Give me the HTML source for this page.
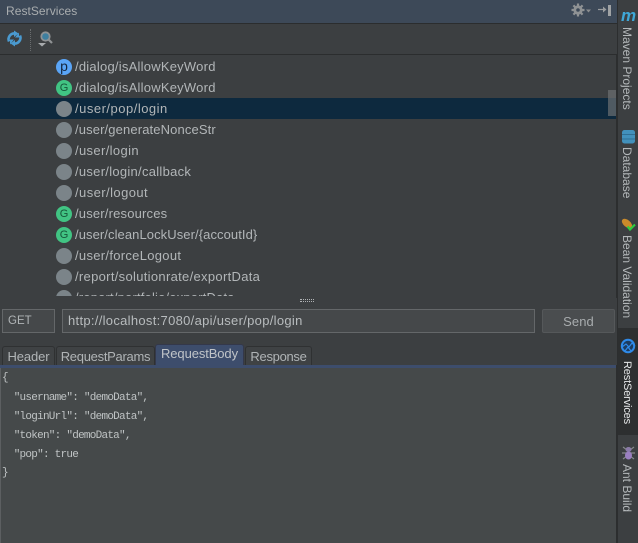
<!DOCTYPE html>
<html><head><meta charset="utf-8"><style>
*{box-sizing:border-box}
html,body{margin:0;padding:0}
body{width:638px;height:543px;overflow:hidden;background:#3c3f41;position:relative;font-family:"Liberation Sans",sans-serif;color:#b4b8ba}
div{position:absolute}
.t{white-space:nowrap;font-size:13px;line-height:18px}
.row{left:75px;width:500px;height:21px;line-height:21px;font-size:13px;color:#b2b6b8;white-space:nowrap;letter-spacing:.18px}
.ic{left:56px;width:16px;height:16px;border-radius:8px;background:#7b8489;color:#2d3436;font-size:11px;line-height:16px;text-align:center}
.g{background:#41c483;color:#17573a}
.p{background:#5aa5f7;color:#14263e;font-size:14px;line-height:14px}
.tab{top:346px;height:20px;background:#3f4244;border:1px solid #2f3132;border-bottom:0;border-radius:3px 3px 0 0;font-size:13px;line-height:19px;text-align:center;color:#b0b4b6}
.code{left:2px;font-family:"Liberation Mono",monospace;font-size:11px;letter-spacing:-.75px;line-height:19px;color:#bfc3c4;white-space:pre}
.v{left:617px;width:20px;writing-mode:vertical-rl;font-size:12px;line-height:20px;white-space:nowrap;text-align:left;color:#b4b8ba}
</style></head><body>
<div style="left:0;top:0;width:617px;height:23px;background:#3d4958"></div>
<div class="t" style="left:6px;top:2px;font-size:12px;color:#a9adaf;letter-spacing:.05px">RestServices</div>
<svg style="position:absolute;left:569px;top:2px" width="24" height="16" viewBox="0 0 24 16"><g fill="#8f9294"><circle cx="9" cy="8" r="4.600"/><g stroke="#8f9294" stroke-width="2.200"><path d="M9 1.500v13M2.500 8h13M4.400 3.400l9.200 9.200M13.600 3.400l-9.200 9.200"/></g><circle cx="9" cy="8" r="1.800" fill="#3d4958"/><path d="M17 7.500h5l-2.500 3z" fill="#8a8d8f"/></g></svg>
<svg style="position:absolute;left:597px;top:3px" width="16" height="14" viewBox="0 0 16 14"><path d="M1 6.500h7" stroke="#9a9d9f" stroke-width="1.200"/><path d="M6 3.500l3.500 3-3.500 3z" fill="#9a9d9f"/><rect x="11" y="2" width="3" height="11" fill="#a0a3a5"/></svg>
<div style="left:0;top:23px;width:617px;height:1px;background:#2b2d2e"></div>
<svg style="position:absolute;left:6px;top:30px" width="17" height="17" viewBox="0 0 17 17"><g fill="none" stroke="#4a9ad0" stroke-width="2.600"><path d="M3 11.500C1.300 7.500 4.500 3 9 3.500"/><path d="M14 5.500c1.700 4-1.500 8.500-6 8"/></g><path d="M8 .5l4.500 3L8 7z" fill="#4a9ad0"/><path d="M9 10l-4.500 3.500L9 16.500z" fill="#4a9ad0"/><path d="M13 2.500v5h-4z" fill="#4a9ad0"/><path d="M4 14.500v-5h4z" fill="#4a9ad0"/></svg>
<div style="left:30px;top:29px;width:1px;height:22px;border-left:1px dotted #6a6d6f"></div>
<svg style="position:absolute;left:37px;top:31px" width="17" height="17" viewBox="0 0 17 17"><circle cx="8.500" cy="5.500" r="4.200" fill="#3f7f9f" stroke="#8f9294" stroke-width="1.800"/><path d="M11.500 8.500l3.500 3.500" stroke="#8f9294" stroke-width="2.200"/><path d="M1 12h8l-4 3.500z" fill="#a8abad"/></svg>
<div style="left:0;top:54px;width:617px;height:1px;background:#2b2d2e"></div>

<div style="left:0;top:98px;width:616px;height:21px;background:#0d293e"></div>
<div class="ic p" style="top:59px">p</div><div class="row" style="top:56px;letter-spacing:.23px">/dialog/isAllowKeyWord</div>
<div class="ic g" style="top:80px">G</div><div class="row" style="top:77px;letter-spacing:.23px">/dialog/isAllowKeyWord</div>
<div class="ic" style="top:101px"></div><div class="row" style="top:98px;letter-spacing:.5px">/user/pop/login</div>
<div class="ic" style="top:122px"></div><div class="row" style="top:119px;letter-spacing:.13px">/user/generateNonceStr</div>
<div class="ic" style="top:143px"></div><div class="row" style="top:140px;letter-spacing:.36px">/user/login</div>
<div class="ic" style="top:164px"></div><div class="row" style="top:161px;letter-spacing:.28px">/user/login/callback</div>
<div class="ic" style="top:185px"></div><div class="row" style="top:182px;letter-spacing:.43px">/user/logout</div>
<div class="ic g" style="top:206px">G</div><div class="row" style="top:203px">/user/resources</div>
<div class="ic g" style="top:227px">G</div><div class="row" style="top:224px;letter-spacing:.08px">/user/cleanLockUser/{accoutId}</div>
<div class="ic" style="top:248px"></div><div class="row" style="top:245px;letter-spacing:.3px">/user/forceLogout</div>
<div class="ic" style="top:269px"></div><div class="row" style="top:266px;letter-spacing:.31px">/report/solutionrate/exportData</div>
<div class="ic" style="top:290px"></div><div class="row" style="top:287px">/report/portfolio/exportData</div>
<div style="left:0;top:296px;width:617px;height:13px;background:#3c3f41"></div>
<div style="left:300px;top:299px;width:14px;height:3px;border-top:1px dotted #b0b3b5;border-bottom:1px dotted #b0b3b5"></div>

<div style="left:608px;top:90px;width:8px;height:26px;background:#4f5a62"></div>
<div style="left:608px;top:90px;width:8px;height:8px;background:#5e6163"></div>
<div style="left:616px;top:55px;width:1px;height:243px;background:#2c2e2f"></div>

<div style="left:2px;top:309px;width:53px;height:24px;border:1px solid #646769;background:#45484a;font-size:11.500px;line-height:22px;padding-left:5px;color:#b0b4b6">GET</div>
<div style="left:62px;top:309px;width:473px;height:24px;border:1px solid #646769;background:#45484a;font-size:13px;line-height:22px;padding-left:5px;color:#b8bcbe;white-space:nowrap;letter-spacing:.3px">http://localhost:7080/api/user/pop/login</div>
<div style="left:542px;top:309px;width:73px;height:24px;border:1px solid #55585a;border-radius:2px;background:#4a4d4f;font-size:13px;line-height:23px;text-align:center;color:#a8acae;letter-spacing:.1px">Send</div>

<div class="tab" style="left:2px;width:53px;letter-spacing:-.1px">Header</div>
<div class="tab" style="left:56px;width:99px;letter-spacing:-.28px">RequestParams</div>
<div class="tab" style="left:155px;top:344px;width:89px;height:22px;background:#3d4d6c;color:#c0c4c8;line-height:18px;border-color:#34384a;letter-spacing:-.1px">RequestBody</div>
<div class="tab" style="left:245px;width:67px;letter-spacing:-.3px">Response</div>
<div style="left:0;top:365px;width:617px;height:3px;background:#3d4d6c"></div>
<div style="left:0;top:368px;width:616px;height:175px;background:#45494a"></div>
<div style="left:0;top:368px;width:1px;height:175px;background:#5c5f61"></div>
<div style="left:616px;top:365px;width:1px;height:178px;background:#2c2e2f"></div>

<div class="code" style="top:369px">{</div>
<div class="code" style="top:389px">  "username": "demoData",</div>
<div class="code" style="top:408px">  "loginUrl": "demoData",</div>
<div class="code" style="top:427px">  "token": "demoData",</div>
<div class="code" style="top:446px">  "pop": true</div>
<div class="code" style="top:464px">}</div>

<div style="left:617px;top:0;width:1px;height:543px;background:#2c2e2f"></div>
<div style="left:618px;top:0;width:20px;height:543px;background:#3c3f41"></div>
<div style="left:618px;top:328px;width:20px;height:107px;background:#2d2f30"></div>
<div class="t" style="left:621px;top:7px;font:italic bold 17px 'Liberation Sans',sans-serif;color:#3fa7d6;line-height:18px">m</div>
<div class="v" style="top:27px">Maven Projects</div>
<svg style="position:absolute;left:622px;top:130px" width="13" height="14" viewBox="0 0 13 14"><rect x="0" y="0" width="13" height="13.500" rx="2.500" fill="#4291bc"/><path d="M0 4.500h13M0 9h13" stroke="#2f6f95" stroke-width="1"/></svg>
<div class="v" style="top:147px">Database</div>
<svg style="position:absolute;left:621px;top:218px" width="15" height="14" viewBox="0 0 15 14"><ellipse cx="6" cy="5.500" rx="6" ry="3.500" transform="rotate(40 6 5.500)" fill="#c98a2b"/><path d="M6.500 8.500l2.500 3L14 6.500" fill="none" stroke="#2ecc40" stroke-width="2.200"/></svg>
<div class="v" style="top:235px">Bean Validation</div>
<svg style="position:absolute;left:620px;top:338px" width="16" height="16" viewBox="0 0 16 16"><circle cx="8" cy="8" r="6.200" fill="#1d3c60" stroke="#2f8ae8" stroke-width="2"/><path d="M2 9l4-3 3 3 3-4 3 3M5 13l3-4 3 4" fill="none" stroke="#2f8ae8" stroke-width="1.200"/></svg>
<div class="v" style="top:361px;color:#e6e8e9;font-size:11px;letter-spacing:-.15px">RestServices</div>
<svg style="position:absolute;left:621px;top:445px" width="15" height="16" viewBox="0 0 15 16"><g stroke="#85888a" stroke-width="1.200" fill="none"><path d="M2 2l4 3M13 2L9 5M1 8h13M2 14l4-3M13 14l-4-3"/></g><ellipse cx="7.500" cy="4.500" rx="3" ry="2.500" fill="#8a7aa8"/><ellipse cx="7.500" cy="10.500" rx="3.500" ry="4" fill="#9a7fc0"/></svg>
<div class="v" style="top:464px">Ant Build</div>
</body></html>
